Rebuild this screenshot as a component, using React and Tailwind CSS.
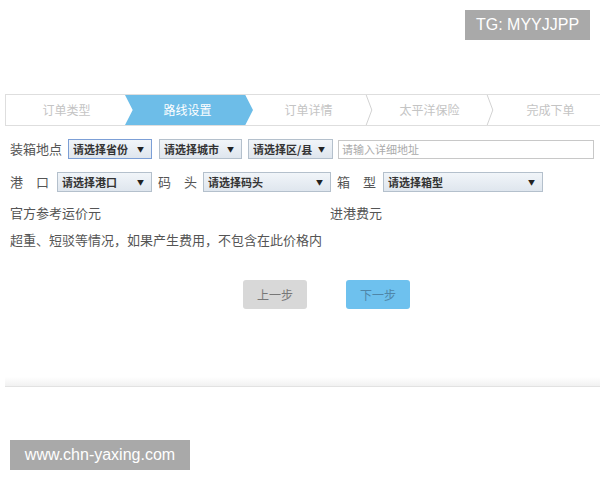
import React from "react";

const STEPS = ["订单类型", "路线设置", "订单详情", "太平洋保险", "完成下单"];

function Select({ label, width, focused }) {
  return (
    <div
      className={`flex h-[20px] items-center justify-between border bg-gradient-to-b from-[#f1f5f9] to-[#dfe6ee] pl-[4px] pr-[7px] ${width} ${
        focused ? "border-[#7c9fd6]" : "border-[#b4c0cc]"
      }`}
    >
      <span className="text-[11px] font-bold text-[#333]">{label}</span>
      <span className="text-[7px] text-[#222]">▼</span>
    </div>
  );
}

function Stepper() {
  return (
    <div className="ml-[5px] flex h-[32px] border-y border-l border-[#dedede] bg-white">
      {STEPS.map((s, i) => {
        const active = i === 1;
        return (
          <div key={s} className="relative flex w-[121px] shrink-0 items-center justify-center">
            {active && (
              <div className="absolute inset-y-0 left-[-2px] right-[-5px] bg-[#6dbde8] [clip-path:polygon(0_0,94%_0,100%_50%,94%_100%,0_100%,6%_50%)]" />
            )}
            <span
              className={`relative text-[12px] ${active ? "text-white" : "text-[#c4c4c4]"}`}
            >
              {s}
            </span>
            {!active && i !== 0 && i < 4 && (
              <svg className="absolute right-[-4px] top-0 h-full w-[8px]" viewBox="0 0 8 32">
                <path d="M1 0 L7 16 L1 32" fill="none" stroke="#cfcfcf" strokeWidth="1" />
              </svg>
            )}
          </div>
        );
      })}
    </div>
  );
}

export default function App() {
  return (
    <div className="relative h-[480px] w-[600px] overflow-hidden bg-white font-['Noto_Sans_CJK_SC',sans-serif] text-[13px] text-[#555]">
      <div className="pt-[94px]">
        <Stepper />

        <div className="mt-[13px] flex items-center pl-[10px]">
          <span className="mr-[6px]">装箱地点</span>
          <Select label="请选择省份" width="w-[84px]" focused />
          <div className="w-[7px]" />
          <Select label="请选择城市" width="w-[83px]" />
          <div className="w-[6px]" />
          <Select label="请选择区/县" width="w-[85px]" />
          <div className="w-[5px]" />
          <div className="flex h-[19px] w-[256px] items-center border border-[#c8c8c8] bg-white pl-[3px] text-[11px] text-[#aaa]">
            请输入详细地址
          </div>
        </div>

        <div className="mt-[13px] flex items-center pl-[10px]">
          <span className="mr-[8px]">港　口</span>
          <Select label="请选择港口" width="w-[95px]" />
          <span className="ml-[6px] mr-[6px]">码　头</span>
          <Select label="请选择码头" width="w-[128px]" />
          <span className="ml-[6px] mr-[7px]">箱　型</span>
          <Select label="请选择箱型" width="w-[160px]" />
        </div>

        <div className="mt-[11px] flex pl-[10px]">
          <span className="w-[320px]">官方参考运价元</span>
          <span>进港费元</span>
        </div>
        <div className="mt-[7px] pl-[10px]">超重、短驳等情况，如果产生费用，不包含在此价格内</div>

        <div className="mt-[31px] flex gap-[39px] pl-[243px]">
          <button className="h-[29px] w-[64px] rounded-[3px] bg-[#d8d8d8] text-[12px] text-[#777]">上一步</button>
          <button className="h-[29px] w-[64px] rounded-[3px] bg-[#6ec1ee] text-[12px] text-[#4f86a8]">下一步</button>
        </div>

        <div className="ml-[5px] mt-[68px] h-[10px] border-b border-[#e2e2e2] bg-gradient-to-b from-white to-[#f1f1f1]" />
      </div>

      <div className="absolute right-[10px] top-[10px] flex h-[30px] w-[125px] items-center justify-center bg-[#a9a9a9] font-['Liberation_Sans',sans-serif] text-[16px] text-white">
        TG: MYYJJPP
      </div>
      <div className="absolute left-[10px] top-[440px] flex h-[30px] w-[180px] items-center justify-center bg-[#a9a9a9] font-['Liberation_Sans',sans-serif] text-[16px] text-white">
        www.chn-yaxing.com
      </div>
    </div>
  );
}
